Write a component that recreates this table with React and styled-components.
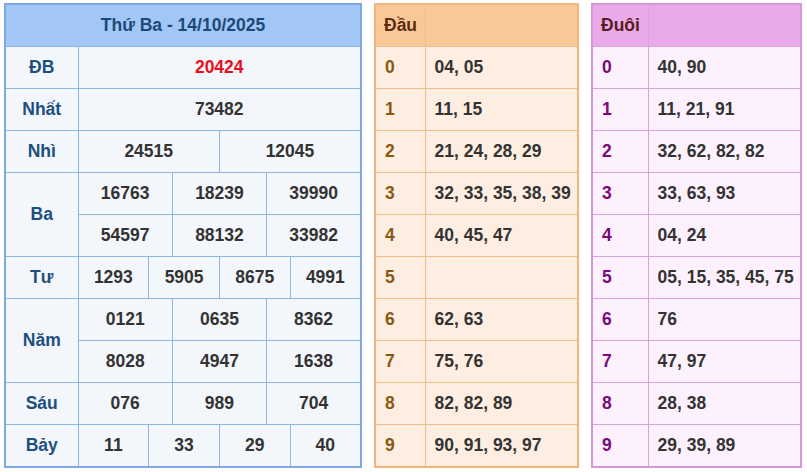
import React from 'react';
import styled, { createGlobalStyle } from 'styled-components';

const GlobalStyle = createGlobalStyle`
  body {
    margin: 0;
    background: #ffffff;
    font-family: "Liberation Sans", Arial, sans-serif;
  }
`;

const Page = styled.div`
  display: flex;
  align-items: flex-start;
  gap: 12px;
  padding: 3px 4px;
`;

const Table = styled.table`
  border-collapse: collapse;
  table-layout: fixed;
  width: ${p => p.$width}px;
  border: 2px solid ${p => p.$border};
  background: ${p => p.$bg};
  font-size: 17.5px;
  font-weight: bold;
  color: #333;
  td, th {
    border: 1px solid ${p => p.$line};
    height: 41px;
    padding: 0;
  }
`;

const HeadCell = styled.th`
  background: ${p => p.$bg};
  color: ${p => p.$color};
  text-align: ${p => p.$align || 'center'};
  padding-left: ${p => p.$pad || 0}px !important;
`;

const Label = styled.td`
  color: ${p => p.$color};
  text-align: ${p => p.$align || 'center'};
  padding-left: ${p => p.$pad || 0}px !important;
`;

const Num = styled.td`
  text-align: ${p => p.$align || 'center'};
  color: ${p => (p.$red ? '#e8101a' : '#333')};
  padding-left: ${p => p.$pad || 0}px !important;
`;

const prizes = [
  { name: 'ĐB', rows: [['20424']], red: true },
  { name: 'Nhất', rows: [['73482']] },
  { name: 'Nhì', rows: [['24515', '12045']] },
  { name: 'Ba', rows: [['16763', '18239', '39990'], ['54597', '88132', '33982']] },
  { name: 'Tư', rows: [['1293', '5905', '8675', '4991']] },
  { name: 'Năm', rows: [['0121', '0635', '8362'], ['8028', '4947', '1638']] },
  { name: 'Sáu', rows: [['076', '989', '704']] },
  { name: 'Bảy', rows: [['11', '33', '29', '40']] },
];

const dau = ['04, 05', '11, 15', '21, 24, 28, 29', '32, 33, 35, 38, 39', '40, 45, 47', '', '62, 63', '75, 76', '82, 82, 89', '90, 91, 93, 97'];
const duoi = ['40, 90', '11, 21, 91', '32, 62, 82, 82', '33, 63, 93', '04, 24', '05, 15, 35, 45, 75', '76', '47, 97', '28, 38', '29, 39, 89'];

function ResultTable() {
  const cols = Array.from({ length: 12 });
  return (
    <Table $width={358} $border="#7ea8e2" $line="#8fb4e6" $bg="#f3f6fa">
      <colgroup>
        <col style={{ width: 73 }} />
        {cols.map((_, i) => <col key={i} />)}
      </colgroup>
      <thead>
        <tr>
          <HeadCell colSpan={13} $bg="#a2c6f6" $color="#1b4a78">Thứ Ba - 14/10/2025</HeadCell>
        </tr>
      </thead>
      <tbody>
        {prizes.map(p =>
          p.rows.map((row, ri) => (
            <tr key={p.name + ri}>
              {ri === 0 && (
                <Label rowSpan={p.rows.length} $color="#1b4f80">{p.name}</Label>
              )}
              {row.map((n, i) => (
                <Num key={i} colSpan={12 / row.length} $red={p.red}>{n}</Num>
              ))}
            </tr>
          ))
        )}
      </tbody>
    </Table>
  );
}

function LotoTable({ title, data, width, first, theme }) {
  return (
    <Table $width={width} $border={theme.border} $line={theme.line} $bg={theme.bg}>
      <colgroup>
        <col style={{ width: first }} />
        <col />
      </colgroup>
      <thead>
        <tr>
          <HeadCell $bg={theme.head} $color={theme.title} $align="left" $pad={8}>{title}</HeadCell>
          <HeadCell $bg={theme.head} />
        </tr>
      </thead>
      <tbody>
        {data.map((v, i) => (
          <tr key={i}>
            <Label $color={theme.label} $align="left" $pad={9}>{i}</Label>
            <Num $align="left" $pad={9}>{v}</Num>
          </tr>
        ))}
      </tbody>
    </Table>
  );
}

const orange = { border: '#f0b57c', line: '#efbd8a', bg: '#fdeee1', head: '#f9c898', title: '#5b2c0c', label: '#8a5810' };
const pink = { border: '#d597d5', line: '#dba4db', bg: '#fdf1fd', head: '#e8aae8', title: '#5a1c1c', label: '#7a0a7a' };

export default function App() {
  return (
    <>
      <GlobalStyle />
      <Page>
        <ResultTable />
        <LotoTable title="Đầu" data={dau} width={205} first={50} theme={orange} />
        <LotoTable title="Đuôi" data={duoi} width={211} first={56} theme={pink} />
      </Page>
    </>
  );
}
